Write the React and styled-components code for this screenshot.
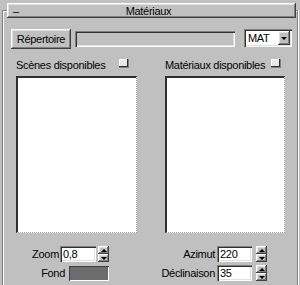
import React from 'react';
import styled, { createGlobalStyle } from 'styled-components';

const Global = createGlobalStyle`
	html, body {
		margin: 0;
		padding: 0;
		background: #c0c0c0;
		font-family: "Liberation Sans", Arial, sans-serif;
		font-size: 11px;
		letter-spacing: -0.3px;
		color: #000;
	}
	#root {
		width: 300px;
		height: 285px;
		overflow: hidden;
	}
`;

const raised = `
	box-shadow: inset -1px -1px #404040, inset 1px 1px #ffffff, inset -2px -2px #808080, inset 2px 2px #dfdfdf;
`;

const sunken = `
	box-shadow: inset 1px 1px #808080, inset 2px 2px #303030, inset -1px -1px #ffffff, inset -2px -2px #dfdfdf;
`;

const Frame = styled.div`
	margin: 10px 2px 0 2px;
	height: 290px;
	border-left: 1px solid #808080;
	border-right: 1px solid #808080;
	border-top: 1px solid #808080;
	box-shadow: inset 1px 1px #ffffff, 1px 0 #ffffff;
`;

const TitleBar = styled.div`
	margin: -8px 1px 0 4px;
	height: 15px;
	background: #c0c0c0;
	${raised}
	display: flex;
	align-items: center;
	padding: 0 6px;
`;

const Collapse = styled.span`
	width: 40px;
`;

const Title = styled.span`
	flex: 1;
	text-align: center;
	margin-right: 46px;
	padding-top: 1px;
`;

const Toolbar = styled.div`
	display: flex;
	align-items: center;
	margin: 11px 0 0 8px;
	height: 20px;
`;

const Button = styled.div`
	width: 60px;
	height: 20px;
	${raised}
	display: flex;
	align-items: center;
	justify-content: center;
`;

const Field = styled.div`
	width: ${(p) => p.$w}px;
	height: ${(p) => p.$h || 16}px;
	background: ${(p) => p.$bg || '#c0c0c0'};
	${sunken}
	margin-left: ${(p) => p.$ml || 0}px;
	display: flex;
	align-items: center;
	padding-left: 3px;
	box-sizing: border-box;
`;

const Combo = styled.div`
	margin-left: 9px;
	width: 48px;
	height: 18px;
	margin-top: -2px;
	background: #fff;
	${sunken}
	display: flex;
	align-items: center;
	justify-content: space-between;
	padding: 0 2px 0 4px;
	box-sizing: border-box;
`;

const ArrowBtn = styled.div`
	width: 12px;
	height: 14px;
	background: #c0c0c0;
	${raised}
	display: flex;
	align-items: center;
	justify-content: center;
`;

const Down = styled.div`
	width: 0;
	height: 0;
	border-left: 3px solid transparent;
	border-right: 3px solid transparent;
	border-top: 3px solid #000;
`;

const Up = styled.div`
	width: 0;
	height: 0;
	border-left: 3px solid transparent;
	border-right: 3px solid transparent;
	border-bottom: 3px solid #000;
`;

const SmallDown = styled(Up)`
	border-bottom: none;
	border-top: 3px solid #000;
`;

const Lists = styled.div`
	display: grid;
	grid-template-columns: 121px 120px;
	column-gap: 28px;
	margin: 10px 0 0 13px;
`;

const Column = styled.div`
	display: flex;
	flex-direction: column;
`;

const ListHead = styled.div`
	display: flex;
	align-items: center;
	justify-content: space-between;
	height: 12px;
	white-space: nowrap;
	padding-right: ${(p) => p.$pr}px;
`;

const Check = styled.div`
	flex: none;
	width: 9px;
	height: 8px;
	background: #e8e8e8;
	box-shadow: inset -1px -1px #303030, inset 1px 1px #ffffff;
	border-right: 1px solid #808080;
	border-bottom: 1px solid #808080;
	margin-top: -3px;
`;

const ListBox = styled.div`
	margin-top: 5px;
	height: 157px;
	background: #fff;
	border-left: 2px solid #303030;
	border-top: 2px solid #303030;
	border-right: 1px dotted #a0a0a0;
	border-bottom: 1px dotted #a0a0a0;
	box-sizing: border-box;
`;

const Controls = styled.div`
	display: grid;
	grid-template-columns: 93px 102px;
	column-gap: 56px;
	margin: 13px 0 0 13px;
`;

const Group = styled.div`
	display: flex;
	flex-direction: column;
	align-items: flex-end;
	gap: 3px;
`;

const Row = styled.div`
	display: flex;
	align-items: center;
	height: 16px;
	white-space: nowrap;
`;

const Label = styled.span`
	margin-right: ${(p) => p.$mr || 1}px;
`;

const Spinner = styled.div`
	display: flex;
	flex-direction: column;
	margin-left: ${(p) => p.$ml}px;
	width: 11px;
	height: 16px;
`;

const SpinHalf = styled.div`
	flex: 1;
	${raised}
	display: flex;
	align-items: center;
	justify-content: center;
`;

const Swatch = styled.div`
	width: 40px;
	height: 15px;
	background: #6c6c6c;
	box-shadow: inset 1px 1px #404040, inset -1px -1px #ffffff;
`;

const Spin = ({ ml }) => (
	<Spinner $ml={ml}>
		<SpinHalf><Up /></SpinHalf>
		<SpinHalf><SmallDown /></SpinHalf>
	</Spinner>
);

export default function App() {
	return (
		<>
			<Global />
			<Frame>
				<TitleBar>
					<Collapse>–</Collapse>
					<Title>Matériaux</Title>
				</TitleBar>
				<Toolbar>
					<Button>Répertoire</Button>
					<Field $w={160} $ml={4} />
					<Combo>
						MAT
						<ArrowBtn><Down /></ArrowBtn>
					</Combo>
				</Toolbar>
				<Lists>
					<Column>
						<ListHead $pr={8}>
							<span>Scènes disponibles</span>
							<Check />
						</ListHead>
						<ListBox />
					</Column>
					<Column>
						<ListHead $pr={4}>
							<span>Matériaux disponibles</span>
							<Check />
						</ListHead>
						<ListBox />
					</Column>
				</Lists>
				<Controls>
					<Group>
						<Row>
							<Label>Zoom</Label>
							<Field $w={36} $bg="#fff">0,8</Field>
							<Spin ml={2} />
						</Row>
						<Row>
							<Label $mr={4}>Fond</Label>
							<Swatch />
						</Row>
					</Group>
					<Group>
						<Row>
							<Label $mr={2}>Azimut</Label>
							<Field $w={35} $bg="#fff">220</Field>
							<Spin ml={4} />
						</Row>
						<Row>
							<Label $mr={2}>Déclinaison</Label>
							<Field $w={35} $bg="#fff">35</Field>
							<Spin ml={4} />
						</Row>
					</Group>
				</Controls>
			</Frame>
		</>
	);
}
